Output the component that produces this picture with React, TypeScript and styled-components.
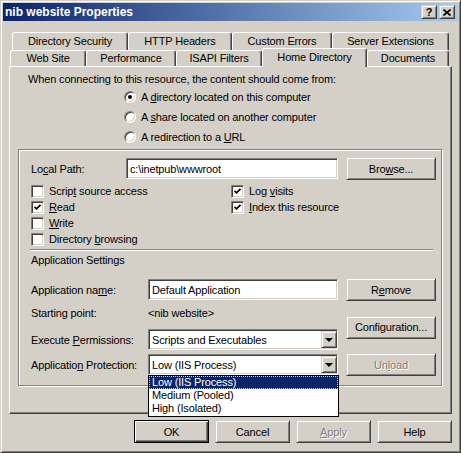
import styled, { createGlobalStyle, css } from "styled-components";

const face = "#d4d0c8";
const shade = "#808080";
const dark = "#404040";

const GlobalStyle = createGlobalStyle`
  html, body {
    margin: 0;
    padding: 0;
    background: ${face};
  }
  body {
    font-family: "Liberation Sans", Arial, sans-serif;
    font-size: 11px;
    letter-spacing: -0.15px;
    color: #000;
  }
`;

// classic 3D edges
const raised = css`
  border: 1px solid;
  border-color: ${face} ${dark} ${dark} ${face};
  box-shadow: inset 1px 1px 0 #fff, inset -1px -1px 0 ${shade};
`;

const sunken = css`
  border: 1px solid;
  border-color: ${shade} #fff #fff ${shade};
  box-shadow: inset 1px 1px 0 ${dark}, inset -1px -1px 0 ${face};
`;

const Window = styled.div`
  width: 461px;
  height: 453px;
  box-sizing: border-box;
  padding: 2px;
  background: ${face};
  ${raised};
  display: flex;
  flex-direction: column;
`;

const TitleBar = styled.div`
  height: 18px;
  display: flex;
  align-items: center;
  padding: 0 3px 0 2px;
  background: linear-gradient(to right, #0a246a, #a6caf0);
`;

const Title = styled.div`
  flex: 1;
  color: #fff;
  font-weight: bold;
  font-size: 12px;
  letter-spacing: 0;
`;

const CaptionButton = styled.div`
  width: 16px;
  height: 14px;
  box-sizing: border-box;
  background: ${face};
  ${raised};
  display: flex;
  align-items: center;
  justify-content: center;
  font-weight: bold;
  font-size: 11px;
  & + & {
    margin-left: 2px;
  }
`;

const Body = styled.div`
  padding: 11px 6px 0;
  display: flex;
  flex-direction: column;
`;

const TabStrip = styled.div`
  height: 34px;
  display: flex;
  flex-direction: column;
`;

const TabRow = styled.div<{ $indent: number; $h: number }>`
  display: flex;
  height: ${(p) => p.$h}px;
  padding-left: ${(p) => p.$indent}px;
  position: relative;
`;

const Tab = styled.div<{ $w: number; $active?: boolean }>`
  width: ${(p) => p.$w}px;
  box-sizing: border-box;
  background: ${face};
  border-top: 1px solid #fff;
  border-left: 1px solid #fff;
  border-right: 1px solid ${dark};
  border-radius: 3px 3px 0 0;
  box-shadow: inset -1px 0 0 ${shade};
  display: flex;
  align-items: center;
  justify-content: center;
  padding-bottom: 1px;
  white-space: nowrap;
  ${(p) =>
    p.$active &&
    css`
      position: relative;
      z-index: 2;
      height: 19px;
      margin-top: -2px;
      padding-bottom: 2px;
    `}
`;

const Panel = styled.div`
  height: 348px;
  box-sizing: border-box;
  border: 1px solid;
  border-color: #fff ${dark} ${dark} #fff;
  box-shadow: inset -1px -1px 0 ${shade};
  padding: 6px 0 0;
  display: flex;
  flex-direction: column;
`;

const Intro = styled.div`
  line-height: 13px;
  padding-left: 18px;
`;

const RadioList = styled.div`
  margin: 1px 0 0 114px;
  display: flex;
  flex-direction: column;
`;

const RadioItem = styled.div`
  height: 20px;
  display: flex;
  align-items: center;
  gap: 5px;
`;

const RadioDot = styled.span<{ $on?: boolean }>`
  width: 12px;
  height: 12px;
  box-sizing: border-box;
  border-radius: 50%;
  background: #fff;
  border: 1px solid;
  border-color: ${shade} #fff #fff ${shade};
  box-shadow: inset 1px 1px 0 ${dark}, inset -1px -1px 0 ${face};
  display: flex;
  align-items: center;
  justify-content: center;
  &::after {
    content: "";
    width: 4px;
    height: 4px;
    border-radius: 50%;
    background: ${(p) => (p.$on ? "#000" : "transparent")};
  }
`;

const Group = styled.div`
  margin: 2px 0 0 8px;
  width: 424px;
  height: 237px;
  box-sizing: border-box;
  border: 1px solid ${shade};
  box-shadow: 1px 1px 0 #fff, inset 1px 1px 0 #fff;
  padding: 7px 5px 0 12px;
  display: flex;
  flex-direction: column;
`;

const PathRow = styled.div`
  display: grid;
  grid-template-columns: 87px 212px 90px;
  column-gap: 8px;
  height: 23px;
  align-items: center;
`;

const Field = styled.div`
  height: 21px;
  box-sizing: border-box;
  background: #fff;
  ${sunken};
  display: flex;
  align-items: center;
  padding-left: 3px;
  white-space: nowrap;
  overflow: visible;
`;

const Button = styled.div<{ $disabled?: boolean; $default?: boolean; $w?: number }>`
  height: 23px;
  width: ${(p) => (p.$w ? `${p.$w}px` : "auto")};
  box-sizing: border-box;
  background: ${face};
  ${raised};
  display: flex;
  align-items: center;
  justify-content: center;
  white-space: nowrap;
  ${(p) =>
    p.$disabled &&
    css`
      color: ${shade};
      text-shadow: 1px 1px 0 #fff;
    `}
  ${(p) =>
    p.$default &&
    css`
      border: 1px solid #000;
      box-shadow: inset 1px 1px 0 #fff, inset -1px -1px 0 ${dark}, inset -2px -2px 0 ${shade};
    `}
`;

const Checks = styled.div`
  margin-top: 3px;
  display: grid;
  grid-template-columns: 200px 1fr;
  grid-auto-rows: 16px;
`;

const CheckItem = styled.div<{ $col: number; $row: number }>`
  grid-column: ${(p) => p.$col};
  grid-row: ${(p) => p.$row};
  display: flex;
  align-items: center;
  gap: 5px;
`;

const Box = styled.span`
  width: 13px;
  height: 13px;
  box-sizing: border-box;
  background: #fff;
  ${sunken};
  display: flex;
  align-items: center;
  justify-content: center;
`;

const Etched = styled.div`
  margin: 2px 3px 0 -1px;
  height: 0;
  border-top: 1px solid ${shade};
  border-bottom: 1px solid #fff;
`;

const Heading = styled.div`
  margin-top: 3px;
  line-height: 13px;
`;

const AppGrid = styled.div`
  margin-top: 10px;
  display: grid;
  grid-template-columns: 109px 190px 90px;
  grid-template-rows: repeat(4, 25px);
  column-gap: 8px;
  align-items: center;
`;

const Cell = styled.div<{ $span?: number; $lift?: number }>`
  ${(p) => p.$span && `grid-row: span ${p.$span};`}
  ${(p) => p.$lift && `margin-bottom: ${p.$lift}px;`}
  white-space: nowrap;
`;

const SelectWrap = styled.div`
  position: relative;
`;

const Select = styled(Field)`
  padding-right: 0;
  justify-content: space-between;
`;

const DropButton = styled.span`
  width: 16px;
  height: 17px;
  box-sizing: border-box;
  background: ${face};
  ${raised};
  display: flex;
  align-items: center;
  justify-content: center;
  &::after {
    content: "";
    border-left: 4px solid transparent;
    border-right: 4px solid transparent;
    border-top: 4px solid #000;
    margin-top: 1px;
  }
`;

const ListBox = styled.div`
  position: absolute;
  top: 100%;
  left: 0;
  width: 191px;
  box-sizing: border-box;
  border: 1px solid #000;
  background: #fff;
  z-index: 5;
  padding-bottom: 1px;
`;

const ListItem = styled.div<{ $selected?: boolean }>`
  height: 13px;
  line-height: 13px;
  padding-left: 3px;
  white-space: nowrap;
  ${(p) =>
    p.$selected &&
    css`
      background: #0a246a;
      color: #fff;
      outline: 1px dotted #d8d8a0;
      outline-offset: -1px;
    `}
`;

const Footer = styled.div`
  margin-top: 6px;
  display: flex;
  justify-content: flex-end;
  gap: 6px;
`;

function Check() {
  return (
    <svg width="9" height="9" viewBox="0 0 9 9">
      <polyline points="1.5,3.8 3.5,5.8 7.5,1.8" fill="none" stroke="#000" strokeWidth="1.7" />
    </svg>
  );
}

function CloseGlyph() {
  return (
    <svg width="8" height="7" viewBox="0 0 8 7">
      <path d="M0.5 0.5 L7.5 6.5 M7.5 0.5 L0.5 6.5" stroke="#000" strokeWidth="1.6" />
    </svg>
  );
}

const checks = [
  { col: 1, row: 1, on: false, label: <>Scrip<u>t</u> source access</> },
  { col: 1, row: 2, on: true, label: <><u>R</u>ead</> },
  { col: 1, row: 3, on: false, label: <><u>W</u>rite</> },
  { col: 1, row: 4, on: false, label: <>Directory <u>b</u>rowsing</> },
  { col: 2, row: 1, on: true, label: <>Log <u>v</u>isits</> },
  { col: 2, row: 2, on: true, label: <><u>I</u>ndex this resource</> },
];

const protection = ["Low (IIS Process)", "Medium (Pooled)", "High (Isolated)"];

export default function App() {
  return (
    <>
      <GlobalStyle />
      <Window>
        <TitleBar>
          <Title>nib website Properties</Title>
          <CaptionButton>?</CaptionButton>
          <CaptionButton>
            <CloseGlyph />
          </CaptionButton>
        </TitleBar>

        <Body>
          <TabStrip>
            <TabRow $indent={3} $h={18}>
              <Tab $w={116}>Directory Security</Tab>
              <Tab $w={104}>HTTP Headers</Tab>
              <Tab $w={100}>Custom Errors</Tab>
              <Tab $w={117}>Server Extensions</Tab>
            </TabRow>
            <TabRow $indent={1} $h={16}>
              <Tab $w={76}>Web Site</Tab>
              <Tab $w={90}>Performance</Tab>
              <Tab $w={86}>ISAPI Filters</Tab>
              <Tab $w={105} $active>
                Home Directory
              </Tab>
              <Tab $w={82}>Documents</Tab>
            </TabRow>
          </TabStrip>

          <Panel>
            <Intro>When connecting to this resource, the content should come from:</Intro>
            <RadioList>
              <RadioItem>
                <RadioDot $on />
                <span>
                  A <u>d</u>irectory located on this computer
                </span>
              </RadioItem>
              <RadioItem>
                <RadioDot />
                <span>
                  A <u>s</u>hare located on another computer
                </span>
              </RadioItem>
              <RadioItem>
                <RadioDot />
                <span>
                  A redirection to a <u>U</u>RL
                </span>
              </RadioItem>
            </RadioList>

            <Group>
              <PathRow>
                <span>
                  Lo<u>c</u>al Path:
                </span>
                <Field>c:\inetpub\wwwroot</Field>
                <Button>
                  <span>
                    Bro<u>w</u>se...
                  </span>
                </Button>
              </PathRow>

              <Checks>
                {checks.map((c, i) => (
                  <CheckItem key={i} $col={c.col} $row={c.row}>
                    <Box>{c.on && <Check />}</Box>
                    <span>{c.label}</span>
                  </CheckItem>
                ))}
              </Checks>

              <Etched />
              <Heading>Application Settings</Heading>

              <AppGrid>
                <Cell>
                  Application na<u>m</u>e:
                </Cell>
                <Field>Default Application</Field>
                <Button>
                  <span>
                    R<u>e</u>move
                  </span>
                </Button>

                <Cell $lift={4}>Starting point:</Cell>
                <Cell $lift={4}>&lt;nib website&gt;</Cell>
                <Cell $span={2}>
                  <Button>Configuration...</Button>
                </Cell>

                <Cell>
                  Execute <u>P</u>ermissions:
                </Cell>
                <Select>
                  <span>Scripts and Executables</span>
                  <DropButton />
                </Select>

                <Cell>
                  Applicatio<u>n</u> Protection:
                </Cell>
                <SelectWrap>
                  <Select>
                    <span>{protection[0]}</span>
                    <DropButton />
                  </Select>
                  <ListBox>
                    {protection.map((p, i) => (
                      <ListItem key={p} $selected={i === 0}>
                        {p}
                      </ListItem>
                    ))}
                  </ListBox>
                </SelectWrap>
                <Button $disabled>
                  <span>
                    Un<u>l</u>oad
                  </span>
                </Button>
              </AppGrid>
            </Group>
          </Panel>

          <Footer>
            <Button $w={75} $default>
              OK
            </Button>
            <Button $w={75}>Cancel</Button>
            <Button $w={75} $disabled>
              <span>
                <u>A</u>pply
              </span>
            </Button>
            <Button $w={75}>Help</Button>
          </Footer>
        </Body>
      </Window>
    </>
  );
}
